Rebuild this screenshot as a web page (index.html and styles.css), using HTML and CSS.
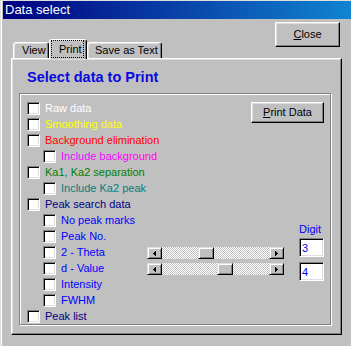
FILE: index.html
```html
<!DOCTYPE html>
<html lang="en">
<head>
  <meta charset="UTF-8">
  <title>Data select</title>
  <link rel="stylesheet" href="styles.css">
</head>
<body>
  <div class="window">
    <div class="titlebar">Data select</div>

    <div class="header">
      <div class="tabs">
        <div class="tab tab-view">View</div>
        <div class="tab tab-active"><span class="focus">Print</span></div>
        <div class="tab tab-save">Save as Text</div>
      </div>
      <button class="btn btn-close"><u>C</u>lose</button>
    </div>

    <div class="panel">
      <h2 class="heading">Select data to Print</h2>
      <div class="group">
        <button class="btn btn-print"><u>P</u>rint Data</button>

        <div class="scroll scroll-theta">
          <span class="sb-btn"><svg width="3" height="5" viewBox="0 0 3 5"><path d="M0 2h1v1H0zM1 1h1v3H1zM2 0h1v5H2z"/></svg></span>
          <span class="sb-track"><span class="sb-thumb" style="margin-left: 36px"></span></span>
          <span class="sb-btn"><svg width="3" height="5" viewBox="0 0 3 5"><path d="M0 0h1v5H0zM1 1h1v3H1zM2 2h1v1H2z"/></svg></span>
        </div>
        <div class="scroll scroll-d">
          <span class="sb-btn"><svg width="3" height="5" viewBox="0 0 3 5"><path d="M0 2h1v1H0zM1 1h1v3H1zM2 0h1v5H2z"/></svg></span>
          <span class="sb-track"><span class="sb-thumb" style="margin-left: 55px"></span></span>
          <span class="sb-btn"><svg width="3" height="5" viewBox="0 0 3 5"><path d="M0 0h1v5H0zM1 1h1v3H1zM2 2h1v1H2z"/></svg></span>
        </div>

        <div class="digit">
          <span class="digit-label">Digit</span>
          <input class="field" type="text" value="3">
          <input class="field field-2" type="text" value="4">
        </div>

        <label class="row c-white"><input type="checkbox">Raw data</label>
        <label class="row c-yellow"><input type="checkbox">Smoothing data</label>
        <label class="row c-red"><input type="checkbox">Background elimination</label>
        <label class="row sub c-magenta"><input type="checkbox">Include background</label>
        <label class="row c-green"><input type="checkbox">Ka1, Ka2 separation</label>
        <label class="row sub c-teal"><input type="checkbox">Include Ka2 peak</label>
        <label class="row c-navy"><input type="checkbox">Peak search data</label>
        <label class="row sub c-blue"><input type="checkbox">No peak marks</label>
        <label class="row sub c-blue"><input type="checkbox">Peak No.</label>
        <label class="row sub c-blue"><input type="checkbox">2 - Theta</label>
        <label class="row sub c-blue"><input type="checkbox">d - Value</label>
        <label class="row sub c-blue"><input type="checkbox">Intensity</label>
        <label class="row sub c-blue"><input type="checkbox">FWHM</label>
        <label class="row c-navy"><input type="checkbox">Peak list</label>
      </div>
    </div>
  </div>
</body>
</html>
```

FILE: styles.css
```css
body {
  margin: 0;
  background-color: #c0c0c0;
  font-family: "Liberation Sans", Arial, sans-serif;
  font-size: 11px;
}

.window {
  box-sizing: border-box;
  width: 351px;
  height: 346px;
  overflow: hidden;
  background-color: #c0c0c0;
  border-top: 1px solid #dfdfdf;
  border-left: 1px solid #dfdfdf;
  box-shadow: inset 1px 0 #fff;
}

.titlebar {
  box-sizing: border-box;
  height: 18px;
  margin-left: 2px;
  padding: 1px 0 0 2px;
  background: linear-gradient(to right, #000080, #1084d0);
  color: #fff;
  font-size: 13px;
  line-height: 16px;
}

.header {
  display: flex;
  justify-content: space-between;
  align-items: flex-start;
  margin-top: 3px;
}

.tabs {
  display: flex;
  align-items: flex-end;
  height: 19px;
  margin: 17px 0 0 12px;
}

.tab {
  box-sizing: border-box;
  height: 16px;
  padding-left: 8px;
  border: 1px solid;
  border-color: #fff #000 transparent #fff;
  border-bottom: 0;
  border-radius: 3px 3px 0 0;
  box-shadow: inset -1px 0 #808080, inset 1px 1px #dfdfdf;
  background-color: #c0c0c0;
  line-height: 15px;
  white-space: nowrap;
}

.tab-view {
  width: 36px;
}

.tab-save {
  width: 75px;
  padding-left: 7px;
}

.tab-active {
  position: relative;
  z-index: 1;
  width: 38px;
  height: 20px;
  margin-bottom: -1px;
  padding: 0 2px 0 1px;
}

.focus {
  display: block;
  box-sizing: border-box;
  width: 33px;
  height: 18px;
  padding: 1px 0 0 7px;
  border: 1px dotted #000;
  line-height: 15px;
}

.btn {
  box-sizing: border-box;
  padding: 0;
  background-color: #c0c0c0;
  color: #000;
  font-family: "Liberation Sans", Arial, sans-serif;
  font-size: 11px;
  line-height: 13px;
  border: 1px solid;
  border-color: #fff #000 #000 #fff;
  box-shadow: inset -1px -1px #808080, inset 1px 1px #dfdfdf;
}

.btn-close {
  width: 65px;
  height: 25px;
  margin-right: 11px;
}

.panel {
  box-sizing: border-box;
  width: 331px;
  height: 277px;
  margin-left: 10px;
  border: 1px solid;
  border-color: #fff #000 #000 #fff;
  box-shadow: inset -1px -1px #808080, inset 1px 1px #dfdfdf;
}

.heading {
  margin: 10px 0 7px 15px;
  color: #0a0ae0;
  font-size: 14.5px;
  font-weight: bold;
  line-height: 17px;
}

.group {
  box-sizing: border-box;
  display: grid;
  grid-template-columns: 120px 104px 33px 15px 25px;
  grid-auto-rows: 16px;
  width: 312px;
  height: 232px;
  margin-left: 7px;
  padding: 8px 6px 0 7px;
  border: 1px solid #808080;
  box-shadow: 1px 1px 0 #fff, inset 1px 1px 0 #fff;
}

.row {
  grid-column: 1;
  align-self: start;
  display: flex;
  align-items: center;
  gap: 5px;
  height: 13px;
  line-height: 13px;
  white-space: nowrap;
}

.row.sub {
  padding-left: 16px;
}

.row input {
  appearance: none;
  flex: none;
  box-sizing: border-box;
  width: 13px;
  height: 13px;
  margin: 0;
  background-color: #fff;
  border: 1px solid;
  border-color: #808080 #fff #fff #808080;
  box-shadow: inset 1px 1px #000, inset -1px -1px #dfdfdf;
}

.c-white { color: #fff; }
.c-yellow { color: #ffff00; }
.c-red { color: #ff0000; }
.c-magenta { color: #ff00ff; }
.c-green { color: #008000; }
.c-teal { color: #008080; }
.c-navy { color: #000080; }
.c-blue { color: #0000ff; }

.btn-print {
  grid-column: 3 / 6;
  grid-row: 1 / 3;
  align-self: start;
  height: 21px;
}

.scroll {
  grid-column: 2 / 4;
  align-self: start;
  display: flex;
  height: 12px;
  margin-top: 1px;
}

.scroll-theta {
  grid-row: 10;
}

.scroll-d {
  grid-row: 11;
}

.sb-btn,
.sb-thumb {
  box-sizing: border-box;
  flex: none;
  height: 12px;
  background-color: #c0c0c0;
  border: 1px solid;
  border-color: #dfdfdf #000 #000 #dfdfdf;
  box-shadow: inset 1px 1px #fff, inset -1px -1px #808080;
}

.sb-btn {
  display: flex;
  align-items: center;
  justify-content: center;
  width: 15px;
}

.sb-btn svg {
  shape-rendering: crispEdges;
}

.sb-track {
  flex: 1;
  display: flex;
  background: repeating-conic-gradient(#c0c0c0 0 25%, #fff 0 50%) 0 0 / 2px 2px;
}

.sb-thumb {
  display: block;
  width: 16px;
}

.digit {
  grid-column: 5;
  grid-row: 8 / 13;
  display: flex;
  flex-direction: column;
  align-items: flex-start;
}

.digit-label {
  margin-top: 9px;
  color: #0000ff;
  line-height: 13px;
}

.field {
  box-sizing: border-box;
  width: 25px;
  height: 19px;
  margin: 2px 0 0;
  padding: 0 0 0 2px;
  background-color: #fff;
  color: #0000ff;
  font-family: "Liberation Sans", Arial, sans-serif;
  font-size: 11px;
  line-height: 15px;
  border: 1px solid;
  border-color: #808080 #fff #fff #808080;
  box-shadow: inset 1px 1px #000, inset -1px -1px #dfdfdf;
  outline: none;
}

.field-2 {
  margin-top: 5px;
}
```
